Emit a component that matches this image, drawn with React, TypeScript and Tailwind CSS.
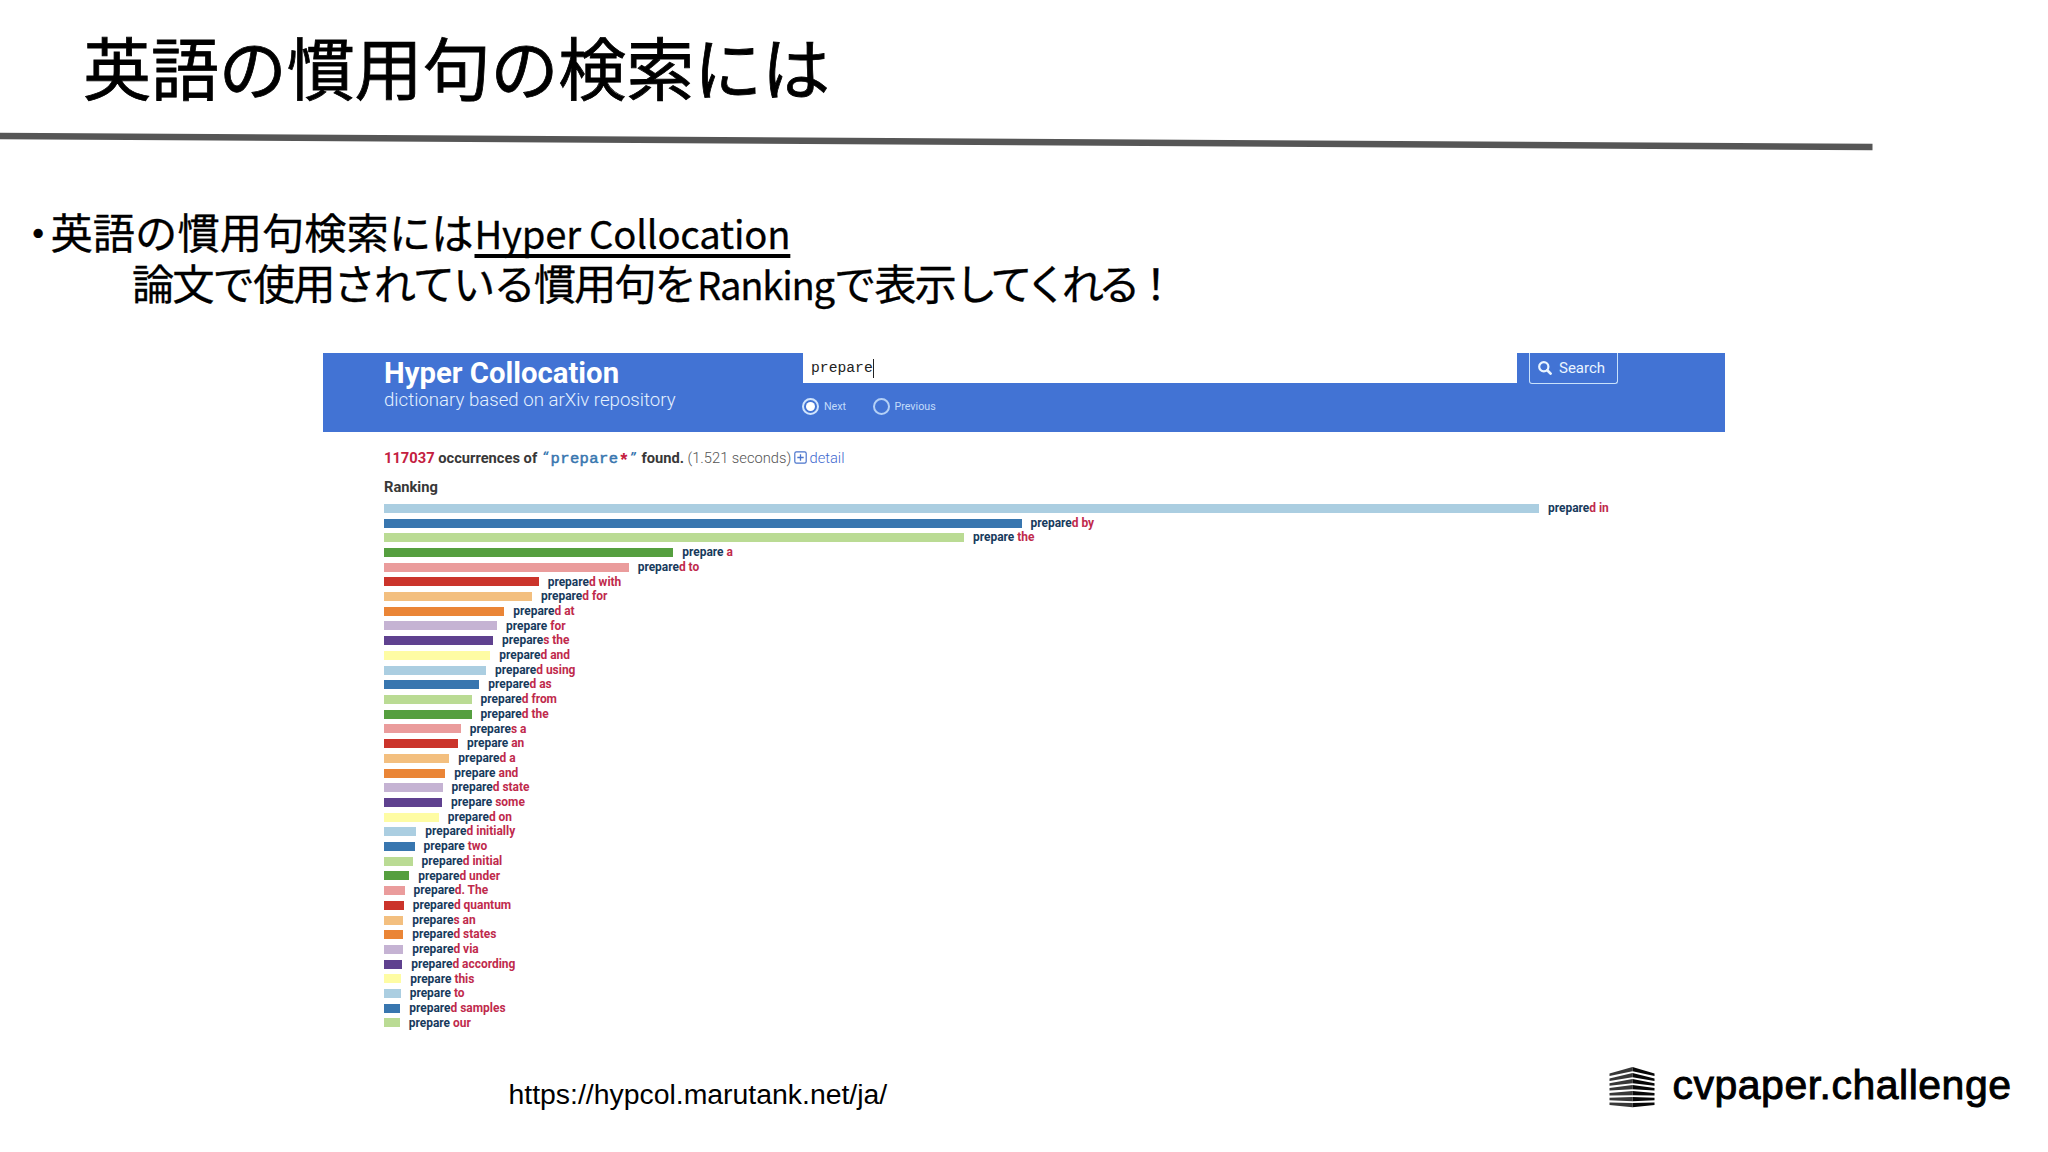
const BARS: [number, string, string][] = [
  [1155, 'd in', ''], [637.5, 'd by', ''], [580, '', 'the'], [289.3, '', 'a'], [244.7, 'd to', ''],
  [154.7, 'd with', ''], [148, 'd for', ''], [120.3, 'd at', ''], [113, '', 'for'], [109, 's the', ''],
  [106.3, 'd and', ''], [102, 'd using', ''], [95.3, 'd as', ''], [87.5, 'd from', ''], [87.5, 'd the', ''],
  [76.7, 's a', ''], [74, '', 'an'], [65.3, 'd a', ''], [61.3, '', 'and'], [58.5, 'd state', ''],
  [58, '', 'some'], [54.7, 'd on', ''], [32.3, 'd initially', ''], [30.5, '', 'two'], [28.5, 'd initial', ''],
  [25.2, 'd under', ''], [20.5, 'd. The', ''], [19.7, 'd quantum', ''], [19.2, 's an', ''], [19.2, 'd states', ''],
  [19.2, 'd via', ''], [18.2, 'd according', ''], [17.2, '', 'this'], [16.7, '', 'to'], [16.3, 'd samples', ''],
  [15.8, '', 'our'],
];

const COLORS = [
  'bg-[#abcee1]', 'bg-[#3876af]', 'bg-[#badb94]', 'bg-[#559f3f]', 'bg-[#ea9c9c]', 'bg-[#cb342b]',
  'bg-[#f3bf7f]', 'bg-[#ea8536]', 'bg-[#c5b3d3]', 'bg-[#5f418f]', 'bg-[#fefca4]',
];

function Ranking() {
  return (
    <div className="mt-[4px] flex flex-col">
      {BARS.map(([w, suffix, next], i) => (
        <div key={i} className="flex h-[14.71px] items-center whitespace-nowrap text-[11.95px] leading-[14.7px] font-bold">
          <div className={`h-[9px] shrink-0 ${COLORS[i % 11]}`} style={{ width: w }} />
          <span className="ml-[9px] text-[#173a5c]">
            prepare<span className="text-[#c02a4c]">{suffix}{next && ` ${next}`}</span>
          </span>
        </div>
      ))}
    </div>
  );
}

function Banner() {
  return (
    <header className="ml-[323px] flex h-[79px] w-[1402px] items-start bg-[#4273d4] pl-[61px] text-white">
      <div className="w-[419px] whitespace-nowrap">
        <div className="mt-[4px] text-[29.3px] leading-[32px] font-bold">Hyper Collocation</div>
        <div className="-mt-px text-[18.65px] leading-[24px] font-light text-[#e4f1ff]">dictionary based on arXiv repository</div>
      </div>
      <div className="w-[714px]">
        <div className="flex h-[30px] items-center bg-white pt-px pl-[8px] font-['Liberation_Mono',monospace] text-[14.7px] text-[#222]">
          prepare
          <span className="h-[19px] w-px bg-[#222]" />
        </div>
        <div className="mt-[15px] flex items-center text-[10.7px] leading-[17px] text-[#c3dcfa]">
          <span className="-ml-px flex size-[17px] items-center justify-center rounded-full border-2 border-[#d0e4fd]">
            <span className="size-[9px] rounded-full bg-white" />
          </span>
          <span className="ml-[5px] w-[48.5px]">Next</span>
          <span className="flex size-[17px] items-center justify-center rounded-full border-2 border-[#b4d0f6]" />
          <span className="ml-[5px]">Previous</span>
        </div>
      </div>
      <button className="ml-[12px] flex h-[31px] w-[89px] items-center rounded-b-[3px] border border-t-0 border-[#c9e2fb] pl-[8px] text-[15px] text-[#eaf5ff]">
        <svg viewBox="0 0 14 14" className="size-[14px]" fill="none" stroke="currentColor">
          <circle cx="5.8" cy="5.8" r="4.6" strokeWidth="2.2" />
          <path d="M9.3 9.3 12.6 12.6" strokeWidth="2.7" strokeLinecap="round" />
        </svg>
        <span className="ml-[7px] pt-px">Search</span>
      </button>
    </header>
  );
}

function Logo() {
  return (
    <svg viewBox="0 0 46 42" className="h-[42px] w-[46px]">
      {[0, 1, 2, 3, 4, 5, 6].map((i) => {
        const side = 6.6 + i * 4.83;
        const top = i * 6;
        return (
          <g key={i}>
            <path d={`M0.5 ${side} L23.5 ${top} V${top + 4.3} L0.5 ${side + 2.5}Z`} fill="#383838" />
            <path d={`M45.5 ${side} L23.5 ${top} V${top + 4.3} L45.5 ${side + 2.5}Z`} fill="#080808" />
          </g>
        );
      })}
    </svg>
  );
}

export default function App() {
  return (
    <main className="h-[1152px] w-[2048px] overflow-hidden bg-white font-['Roboto','Noto_Sans_CJK_JP',sans-serif] text-black">
      <h1 className="h-[131px] pt-[16px] pl-[83px] font-['Noto_Sans_CJK_JP',sans-serif] text-[68px] leading-[100px] font-normal tracking-[-0.1px] whitespace-nowrap [-webkit-text-stroke:0.8px_black]">
        英語の慣用句の検索には
      </h1>
      <svg viewBox="0 0 1880 20" className="block h-[20px] w-[1880px]">
        <path d="M0 5 L1872.5 16" stroke="#565656" strokeWidth="6.6" />
      </svg>
      <div className="mt-[54px] h-[147.5px] font-['Noto_Sans_CJK_JP',sans-serif] text-[42.3px] leading-[51px] whitespace-nowrap [-webkit-text-stroke:0.3px_black]">
        <div className="flex h-[51px] items-baseline pl-[17px]">
          <span className="w-[33.5px] tracking-[-8px]">・</span>
          <span className="w-[424px]">英語の慣用句検索には</span>
          <a className="h-[51px] text-[38.2px] tracking-[-0.22px] underline decoration-[3.5px] underline-offset-[5px] [text-decoration-skip-ink:none]">Hyper Collocation</a>
        </div>
        <div className="flex h-[51px] items-baseline pl-[132px]">
          <span className="w-[565px] tracking-[-2px]">論文で使用されている慣用句を</span>
          <span className="w-[137px] text-[38.2px] tracking-[-1.2px]">Ranking</span>
          <span className="tracking-[-2px]">で表示</span>
          <span className="tracking-[-5.8px]">してくれる！</span>
        </div>
      </div>
      <Banner />
      <section className="h-[607px] pt-[15.5px] pl-[384px]">
        <div className="flex h-[22px] items-center text-[14.7px] leading-[22px] font-bold whitespace-nowrap text-[#383838]">
          <span className="w-[158px]"><span className="text-[#c4203f]">117037</span> occurrences of</span>
          <span className="flex w-[99.5px] items-center font-['Liberation_Mono',monospace] text-[15.5px] text-[#3876af]">
            <span className="w-[8.5px] font-['Roboto'] italic">“</span>
            <span className="pt-[2px] font-normal tracking-[0.4px] [-webkit-text-stroke:0.5px_#3876af]">prepare</span>
            <span className="w-[11px] pt-[5px] text-center text-[18px] text-[#c4203f]">*</span>
            <span className="font-['Roboto'] italic">”</span>
          </span>
          <span className="w-[46px]">found.</span>
          <span className="w-[106.5px] font-light text-[#555]">(1.521 seconds)</span>
          <svg viewBox="0 0 13 13" className="-mt-[2px] size-[13px]" fill="none" stroke="#4a74cc">
            <rect x="0.8" y="0.8" width="11.4" height="11.4" rx="1.6" strokeWidth="1.2" />
            <path d="M6.5 3.3V9.7M3.3 6.5H9.7" strokeWidth="1.3" />
          </svg>
          <span className="ml-[2.5px] font-light text-[#3f69cf]">detail</span>
        </div>
        <div className="mt-[8px] h-[20px] text-[14.7px] leading-[20px] font-bold text-[#383838]">Ranking</div>
        <Ranking />
      </section>
      <footer className="flex items-start">
        <span className="ml-[508.5px] w-[1100.5px] pt-[39px] font-['Liberation_Sans',sans-serif] text-[28.4px] leading-[32px]">
          https://hypcol.marutank.net/ja/
        </span>
        <div className="flex items-start pt-[28px]">
          <Logo />
          <span className="ml-[17.5px] -mt-[4px] font-['Liberation_Sans',sans-serif] text-[41px] leading-[44px] tracking-[0.5px] [-webkit-text-stroke:0.9px_black]">
            cvpaper.challenge
          </span>
        </div>
      </footer>
    </main>
  );
}
